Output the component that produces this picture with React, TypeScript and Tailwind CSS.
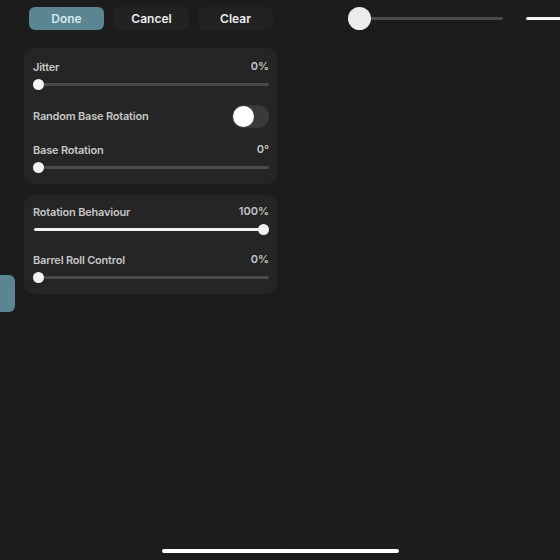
import React from "react";

function Slider({ value, white }: { value: number; white?: boolean }) {
  return (
    <div className="relative h-[11px] mt-[5px]">
      <div className="absolute left-[4px] right-0 top-[4px] h-[3px] rounded-full bg-[#4a4a4a]" />
      {white && (
        <div
          className="absolute left-[1px] top-[4px] h-[3px] rounded-full bg-[#f2f2f2]"
          style={{ width: `calc((100% - 11px) * ${value / 100})` }}
        />
      )}
      <div
        className="absolute top-0 w-[11px] h-[11px] rounded-full bg-[#f4f4f4]"
        style={{ left: `calc((100% - 11px) * ${value / 100})` }}
      />
    </div>
  );
}

function Row({ label, val, value, white }: { label: string; val: string; value: number; white?: boolean }) {
  return (
    <div>
      <div className="flex items-center justify-between h-[14px]">
        <span className="text-[11px] font-semibold tracking-[-0.2px] text-[#c6c6c6] leading-none">{label}</span>
        <span className="text-[11px] font-semibold text-[#c6c6c6] leading-none relative -top-[1px]">{val}</span>
      </div>
      <Slider value={value} white={white} />
    </div>
  );
}

export default function App() {
  return (
    <div
      className="w-[560px] h-[560px] bg-[#1c1c1c] relative overflow-hidden"
      style={{ fontFamily: "Inter, 'Noto Sans', sans-serif" }}
    >
      <div className="flex items-center h-[38px] pt-[7px] pb-[8px] pl-[29px]">
        <div className="w-[75px] h-[23px] rounded-[6px] bg-[#5b8590] flex items-center justify-center text-[12px] font-semibold text-[#d6eaf0]">
          Done
        </div>
        <div className="ml-[10px] w-[75px] h-[23px] rounded-[6px] bg-[#222222] flex items-center justify-center text-[12px] font-semibold text-[#ececec]">
          Cancel
        </div>
        <div className="ml-[9px] w-[75px] h-[23px] rounded-[6px] bg-[#222222] flex items-center justify-center text-[12px] font-semibold text-[#ececec]">
          Clear
        </div>
        <div className="ml-[75px] relative w-[155px] h-[23px] flex items-center">
          <div className="absolute left-[10px] right-0 h-[3px] bg-[#4b4b4b] rounded-full" />
          <div className="relative w-[23px] h-[23px] rounded-full bg-[#ececec]" />
        </div>
        <div className="ml-[23px] h-[3px] flex-1 bg-[#f4f4f4] rounded-l-full" />
      </div>
      <div className="flex h-[522px]">
        <div className="w-[285px] border-r border-[#181818] pl-[24px] pr-[7px] pt-[10px] flex flex-col gap-[11px]">
          <div className="rounded-[10px] bg-[#252525] pl-[9px] pr-[8px] pt-[12px] pb-[11px]">
            <Row label="Jitter" val="0%" value={0} />
            <div className="flex items-center justify-between mt-[15px] h-[23px]">
              <span className="text-[11px] font-semibold tracking-[-0.2px] text-[#c6c6c6]">Random Base Rotation</span>
              <div className="w-[37px] h-[23px] rounded-full bg-[#3a3a3a] flex items-center pl-[1px]">
                <div className="w-[21px] h-[21px] rounded-full bg-white" />
              </div>
            </div>
            <div className="mt-[15px]">
              <Row label="Base Rotation" val="0°" value={0} />
            </div>
          </div>
          <div className="rounded-[10px] bg-[#252525] pl-[9px] pr-[8px] pt-[10px] pb-[11px]">
            <Row label="Rotation Behaviour" val="100%" value={100} white />
            <div className="mt-[18px]">
              <Row label="Barrel Roll Control" val="0%" value={0} />
            </div>
          </div>
        </div>
        <div className="flex-1" />
      </div>
      <div className="absolute left-0 top-[275px] w-[15px] h-[37px] rounded-r-[6px] bg-[#5b8590]" />
      <div className="absolute left-[162px] top-[549px] w-[237px] h-[4px] rounded-full bg-white" />
    </div>
  );
}
